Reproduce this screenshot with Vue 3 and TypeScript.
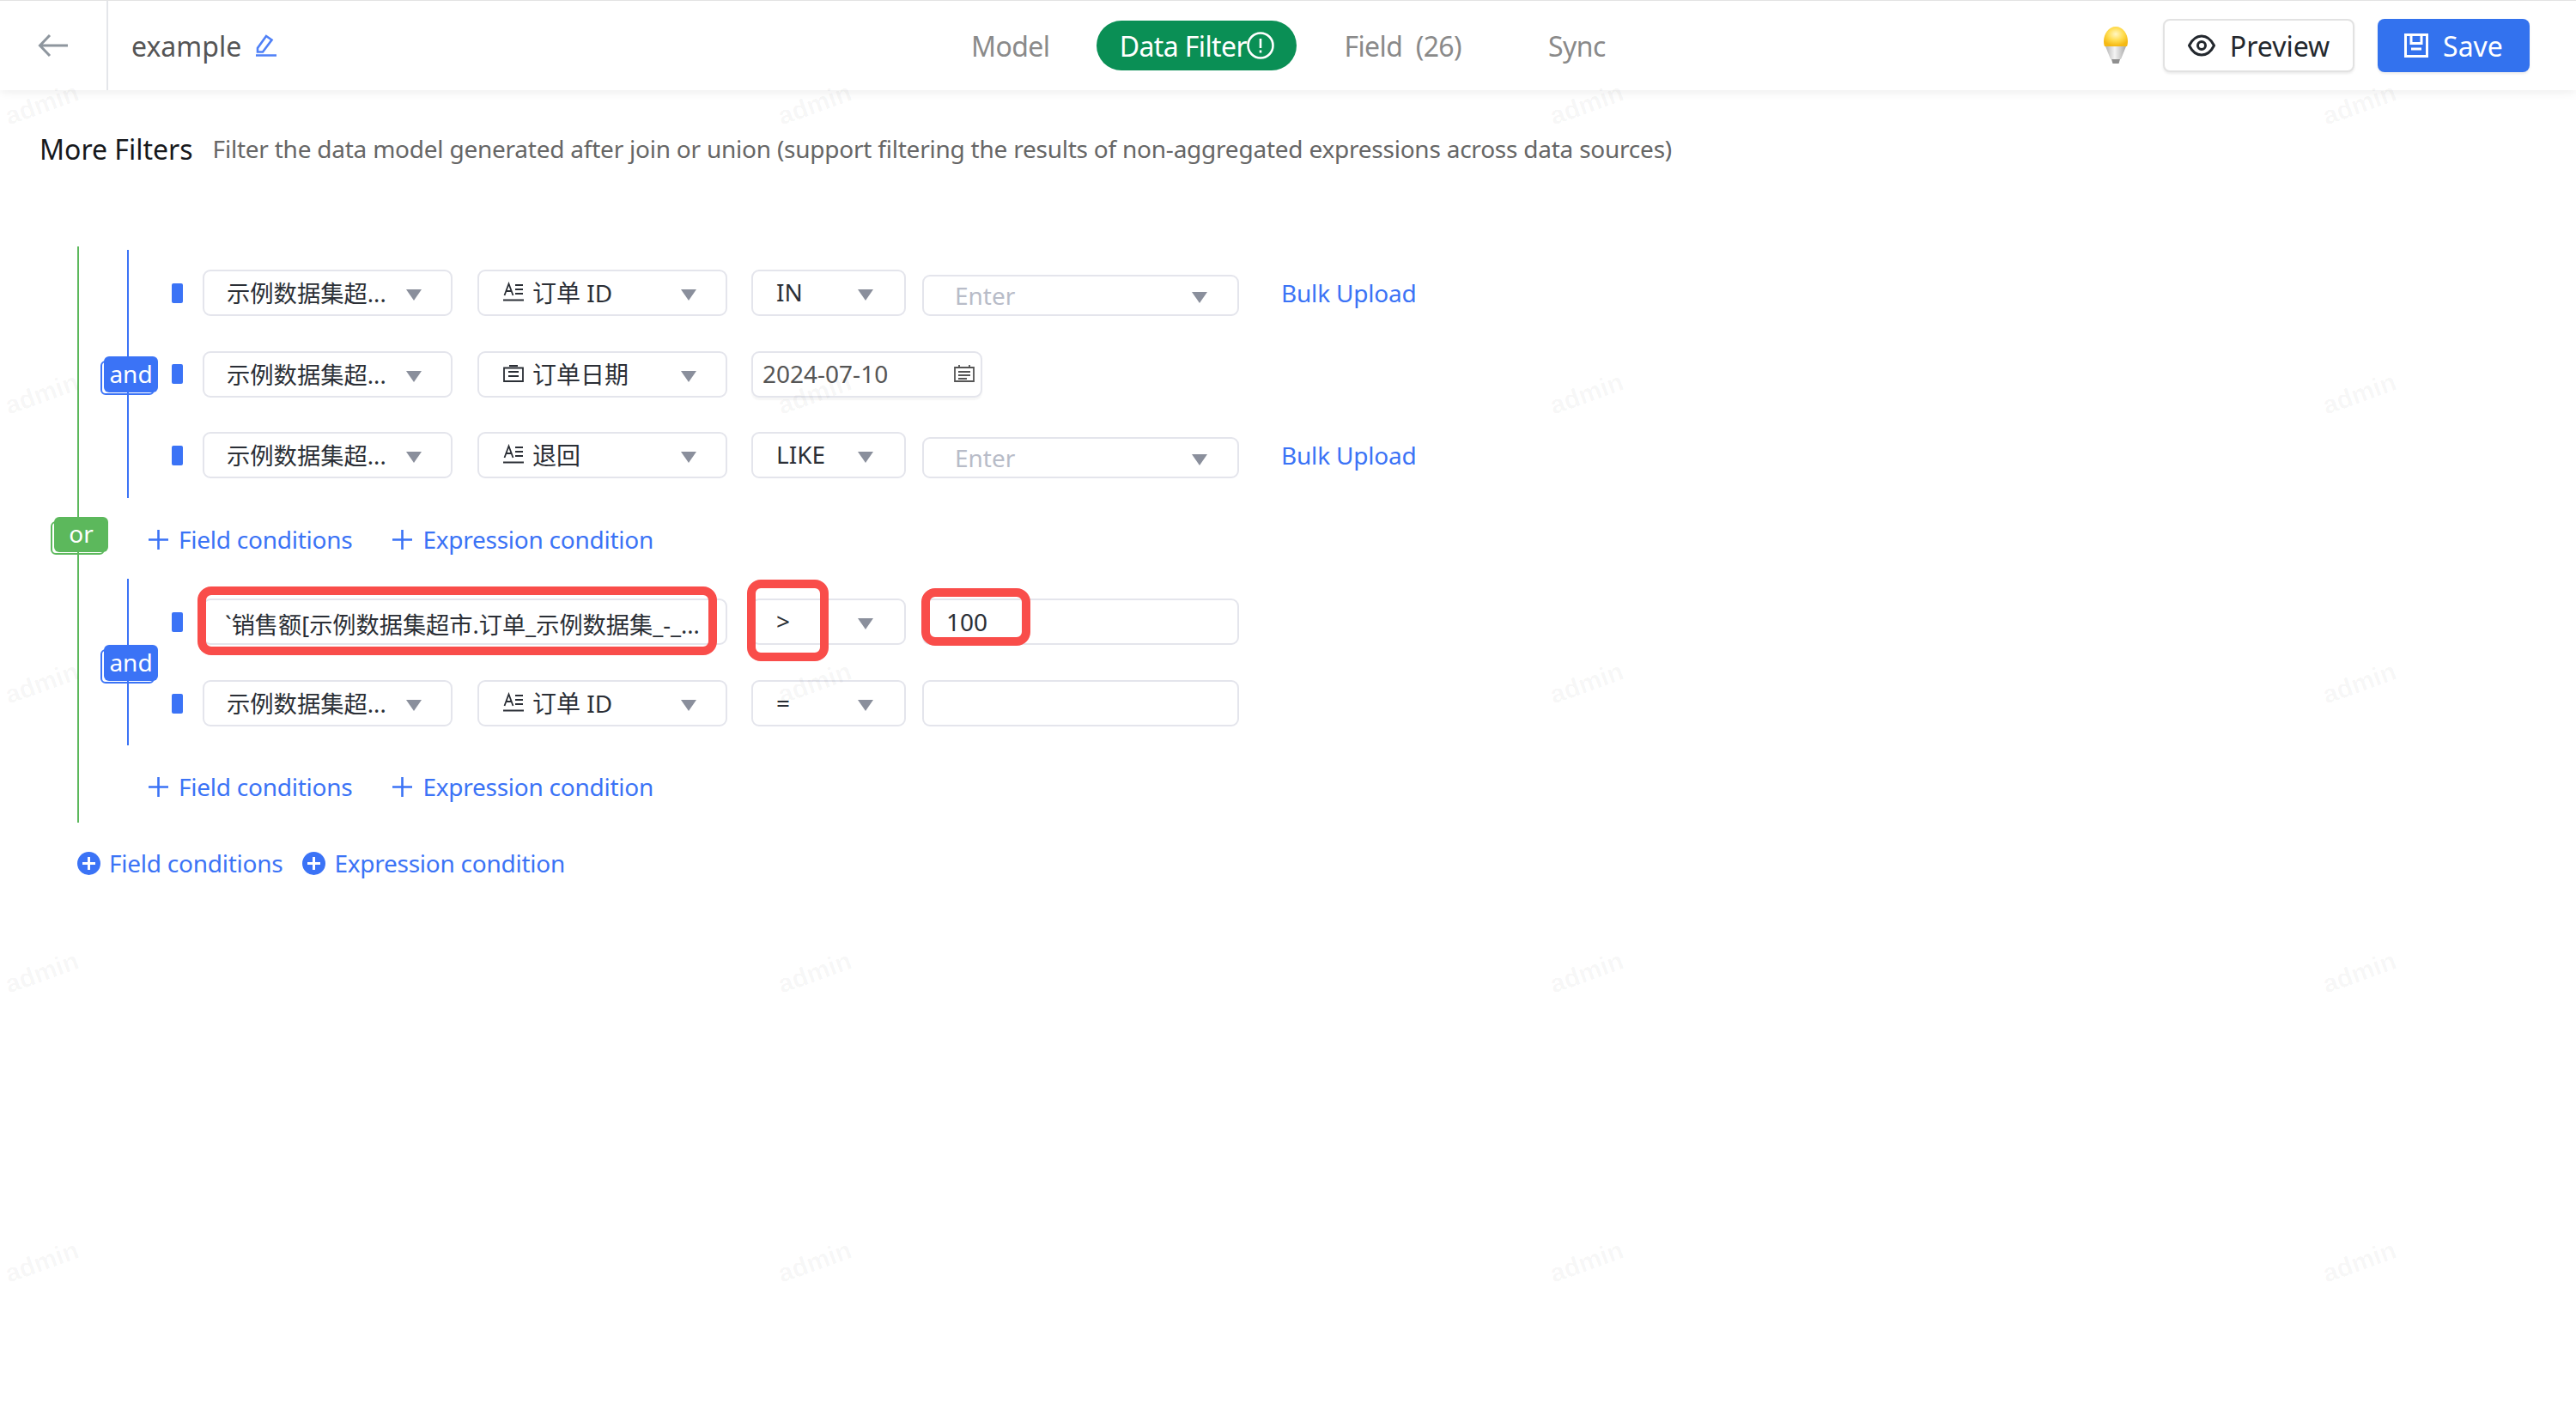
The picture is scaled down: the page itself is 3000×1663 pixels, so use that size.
<script setup lang="ts">
interface Row {
  source?: string
  field?: string
  icon?: 'text' | 'date'
  expr?: string
  op?: string
  kind: 'enter' | 'date' | 'plain'
  value?: string
  marked?: boolean
}

const groupOne: Row[] = [
  { source: '示例数据集超...', field: '订单 ID', icon: 'text', op: 'IN', kind: 'enter' },
  { source: '示例数据集超...', field: '订单日期', icon: 'date', kind: 'date', value: '2024-07-10' },
  { source: '示例数据集超...', field: '退回', icon: 'text', op: 'LIKE', kind: 'enter' },
]
const groupTwo: Row[] = [
  { expr: '`销售额[示例数据集超市.订单_示例数据集_-_...', op: '>', kind: 'plain', value: '100', marked: true },
  { source: '示例数据集超...', field: '订单 ID', icon: 'text', op: '=', kind: 'plain' },
]
const groups = [
  { rows: groupOne, cls: 'group-a' },
  { rows: groupTwo, cls: 'group-b' },
]
const tabs = ['Model']
const marks = Array.from({ length: 20 }, (_, i) => i)
</script>

<template>
  <div class="page">
    <header class="topbar">
      <div class="back">
        <svg width="36" height="28" viewBox="0 0 36 28" fill="none" stroke="#8e969e" stroke-width="3"><path d="M35 14H3M14 2 2.500 14 14 26" /></svg>
      </div>
      <div class="title">
        <span>example</span>
        <svg width="26" height="26" viewBox="0 0 26 26" fill="none" stroke="#4f80f7" stroke-width="2.600"><path d="M1 24.500H25M3 20.500V16L13 2l6.500 4.500L9 20.500Z" /></svg>
      </div>
      <nav class="tabs">
        <span v-for="t in tabs" :key="t" class="tab">{{ t }}</span>
        <span class="pill">Data Filter<svg width="32" height="32" viewBox="0 0 32 32" fill="none" stroke="#fff" stroke-width="2.600"><circle cx="16" cy="16" r="14.500" /><path d="M16 8v11M16 21.500v3" /></svg></span>
        <span class="tab">Field&nbsp; (26)</span>
        <span class="tab sync">Sync</span>
      </nav>
      <div class="actions">
        <svg class="bulb" width="30" height="44" viewBox="0 0 30 44">
          <defs>
            <radialGradient id="glass" cx="50%" cy="38%" r="60%"><stop offset="0" stop-color="#fff6c4" /><stop offset=".55" stop-color="#ffdc4e" /><stop offset="1" stop-color="#f5b914" /></radialGradient>
            <linearGradient id="metal" x1="0" x2="1" y1="0" y2="0"><stop offset="0" stop-color="#b4b4b4" /><stop offset=".45" stop-color="#f4f4f4" /><stop offset="1" stop-color="#a8a8a8" /></linearGradient>
          </defs>
          <path d="M15 0C7 0 1 8 1 17c0 3 .5 5 1 6h26c.5-1 1-3 1-6C29 8 23 0 15 0Z" fill="url(#glass)" />
          <path d="M3 23h24l-6 15H9Z" fill="url(#metal)" />
          <path d="M10 38h10l-1.500 5h-7Z" fill="#8f8f8f" />
        </svg>
        <button class="btn ghost">
          <svg width="32" height="26" viewBox="0 0 32 26" fill="none" stroke="#23282e" stroke-width="3"><path d="M1.500 13C5 6 10 2 16 2s11 4 14.500 11C27 20 22 24 16 24S5 20 1.500 13Z" /><circle cx="16" cy="13" r="4.500" /></svg>
          Preview
        </button>
        <button class="btn primary">
          <svg width="28" height="28" viewBox="0 0 28 28" fill="none" stroke="#fff" stroke-width="3"><path d="M1.500 1.500h25v25h-25ZM8 2v9.500h12V2M8 18h12" /></svg>
          Save
        </button>
      </div>
    </header>

    <main class="content">
      <div class="heading">
        <h1>More Filters</h1>
        <p>Filter the data model generated after join or union (support filtering the results of non-aggregated expressions across data sources)</p>
      </div>

      <div class="outer">
        <template v-for="(g, gi) in groups" :key="g.cls">
          <section class="group" :class="g.cls">
            <span class="badge and">and</span>
            <div v-for="(r, ri) in g.rows" :key="ri" class="row">
              <i class="handle" />
              <template v-if="r.expr">
                <div class="box expr">
                  <span class="clip">{{ r.expr }}</span>
                  <b class="mark m1" />
                </div>
              </template>
              <template v-else>
                <div class="box source"><span>{{ r.source }}</span><i class="caret" /></div>
                <div class="box field">
                  <svg v-if="r.icon === 'text'" class="ficon" width="24" height="24" viewBox="0 0 24 24" fill="none" stroke="#2b2f36" stroke-width="1.800"><path d="M1.500 16 6.500 2.500 11.500 16M3.500 11h6M14 4h9M14 9h9M14 14h9M0 21.500h24" /></svg>
                  <svg v-else class="ficon" width="24" height="20" viewBox="0 0 24 20" fill="none" stroke="#2b2f36" stroke-width="1.800"><path d="M1 3.500h22v15.500H1ZM7 1h10M6 8h12M6 13h12" /></svg>
                  <span>{{ r.field }}</span><i class="caret" />
                </div>
              </template>
              <div v-if="r.kind === 'date'" class="box date">
                <span>{{ r.value }}</span>
                <svg width="24" height="20" viewBox="0 0 24 20" fill="none" stroke="#555" stroke-width="1.800"><path d="M1 3h22v16H1ZM6 0v4M18 0v4M5 8h14M5 12h14M5 16h10" /></svg>
              </div>
              <template v-else>
                <div class="box op"><span>{{ r.op }}</span><i class="caret" /><b v-if="r.marked" class="mark m2" /></div>
                <div v-if="r.kind === 'enter'" class="box val short"><span class="hint">Enter</span><i class="caret" /></div>
                <div v-else class="box val"><span>{{ r.value }}</span><b v-if="r.marked" class="mark m3" /></div>
              </template>
              <a v-if="r.kind === 'enter'" class="link upload">Bulk Upload</a>
            </div>
          </section>
          <div class="adds">
            <span class="add"><svg width="23" height="23" viewBox="0 0 23 23" stroke="#3b73f6" stroke-width="2.600"><path d="M0 11.500h23M11.500 0v23" /></svg>Field conditions</span>
            <span class="add"><svg width="23" height="23" viewBox="0 0 23 23" stroke="#3b73f6" stroke-width="2.600"><path d="M0 11.500h23M11.500 0v23" /></svg>Expression condition</span>
            <span v-if="gi === 0" class="badge or">or</span>
          </div>
        </template>
      </div>

      <div class="root-adds">
        <span class="add"><svg width="27" height="27" viewBox="0 0 27 27"><circle cx="13.500" cy="13.500" r="13.500" fill="#3b73f6" /><path d="M6 13.500h15M13.500 6v15" stroke="#fff" stroke-width="3" /></svg>Field conditions</span>
        <span class="add"><svg width="27" height="27" viewBox="0 0 27 27"><circle cx="13.500" cy="13.500" r="13.500" fill="#3b73f6" /><path d="M6 13.500h15M13.500 6v15" stroke="#fff" stroke-width="3" /></svg>Expression condition</span>
      </div>
    </main>

    <div class="watermarks">
      <span v-for="m in marks" :key="m">admin</span>
    </div>
  </div>
</template>

<style>
html, body { margin: 0; background: #fff; }
</style>

<style scoped>
.page {
  position: relative;
  width: 3000px;
  height: 1663px;
  overflow: hidden;
  background: #fff;
  font-family: "Noto Sans", "Noto Sans CJK SC", sans-serif;
  font-size: 28px;
  color: #2b2f36;
}
.topbar {
  display: flex;
  align-items: center;
  box-sizing: border-box;
  height: 105px;
  border-top: 1px solid #e3e3e3;
  box-shadow: 0 2px 12px rgba(0, 0, 0, .08);
  background: #fff;
  position: relative;
}
.back {
  box-sizing: border-box;
  width: 126px;
  height: 100%;
  border-right: 2px solid #e4e6ea;
  display: flex;
  align-items: center;
  padding-left: 44px;
}
.title {
  width: 1005px;
  box-sizing: border-box;
  padding-left: 27px;
  display: flex;
  align-items: center;
  gap: 16px;
  font-size: 32px;
  color: #555;
}
.tabs {
  display: flex;
  align-items: center;
  gap: 55px;
  font-size: 32px;
  letter-spacing: -.6px;
  color: #8a8a8a;
}
.sync { margin-left: 46px; }
.pill {
  box-sizing: border-box;
  display: flex;
  align-items: center;
  justify-content: center;
  width: 233px;
  height: 58px;
  border-radius: 29px;
  background: #0a8f55;
  color: #fff;
}
.actions {
  margin-left: auto;
  margin-right: 54px;
  display: flex;
  align-items: center;
}
.bulb { margin-right: 40px; }
.btn {
  box-sizing: border-box;
  height: 62px;
  border-radius: 8px;
  display: flex;
  align-items: center;
  justify-content: center;
  gap: 17px;
  font: inherit;
  font-size: 32px;
  padding: 0;
  box-shadow: 0 2px 3px rgba(0, 0, 0, .08);
}
.ghost { width: 223px; background: #fff; border: 2px solid #e2e2e2; color: #23282e; }
.primary { width: 177px; margin-left: 27px; background: #3372ee; border: 0; color: #fff; }
.content { padding: 0 0 0 46px; }
.heading {
  display: flex;
  align-items: center;
  gap: 23px;
  height: 44px;
  margin-top: 46px;
}
h1 { margin: 0; font-size: 32px; font-weight: 400; color: #16181c; }
p { margin: 0; font-size: 28px; letter-spacing: -.23px; color: #666; }
.outer {
  box-sizing: border-box;
  width: 2000px;
  margin: 92px 0 0 44px;
  padding: 4px 0 15px 0;
  border-left: 2px solid #5cb85c;
  position: relative;
}
.group {
  position: relative;
  margin-left: 56px;
  border-left: 2px solid #3b73f6;
  padding-left: 50px;
  display: flex;
  flex-direction: column;
}
.group-a { padding-top: 23px; padding-bottom: 23px; gap: 40.500px; }
.group-b { padding-top: 23px; padding-bottom: 22px; gap: 41px; }
.row { display: flex; align-items: center; height: 54px; }
.handle {
  width: 13px;
  height: 23px;
  border-radius: 2px;
  background: #3b73f6;
  margin-right: 23px;
  flex: none;
}
.box {
  box-sizing: border-box;
  position: relative;
  flex: none;
  height: 54px;
  border: 2px solid #e4e5ec;
  border-radius: 9px;
  background: #fff;
  display: flex;
  align-items: center;
  white-space: nowrap;
}
.source { width: 291px; padding-left: 26px; font-size: 27.300px; padding-bottom: 2px; }
.field { width: 291px; margin-left: 29px; padding-left: 28px; padding-bottom: 2px; }
.source .caret, .field .caret { right: 34px; }
.ficon { margin-right: 10px; flex: none; }
.expr { width: 611px; padding: 4px 0 0 24px; font-size: 27.200px; }
.clip { overflow: hidden; white-space: nowrap; }
.caret {
  position: absolute;
  right: 16px;
  top: 21px;
  width: 0;
  height: 0;
  border-left: 9px solid transparent;
  border-right: 9px solid transparent;
  border-top: 13px solid #8a8f9c;
}
.op { width: 180px; margin-left: 28px; padding-left: 27px; padding-bottom: 2px; }
.op .caret { right: 36px; }
.val { width: 369px; margin-left: 19px; padding-left: 26px; }
.val.short { height: 48px; align-self: flex-end; padding-left: 36px; }
.val.short .caret { right: 35px; top: 18px; }
.hint { color: #b8bcc8; }
.date {
  width: 269px;
  margin-left: 28px;
  padding: 0 7px 2px 11px;
  justify-content: space-between;
  color: #555;
  box-shadow: 0 3px 2px rgba(0, 0, 0, .04);
}
.link { color: #3b73f6; }
.upload { margin-left: 49px; letter-spacing: -.2px; }
.adds {
  position: relative;
  display: flex;
  align-items: center;
  gap: 47px;
  height: 54px;
  margin: 21px 0 19px 0;
  padding-left: 81px;
}
.group-b + .adds { margin-bottom: 0; }
.add {
  display: inline-flex;
  align-items: center;
  gap: 12px;
  color: #3b73f6;
  letter-spacing: -.25px;
  white-space: nowrap;
}
.root-adds {
  display: flex;
  gap: 23px;
  margin: 27px 0 0 44px;
  height: 40px;
  align-items: center;
}
.root-adds .add { gap: 10px; }
.badge {
  position: absolute;
  display: flex;
  align-items: center;
  justify-content: center;
  box-sizing: border-box;
  padding-bottom: 3px;
  border-radius: 6px;
  color: #fff;
}
.badge::before {
  content: "";
  position: absolute;
  left: -4px;
  top: 5px;
  right: 4px;
  bottom: -3px;
  border-radius: 6px;
  border: 2px solid;
  z-index: -1;
}
.and { left: -29px; width: 63px; height: 42px; background: #3b73f6; z-index: 1; }
.and::before { border-color: #3b73f6; }
.group-a .and { top: 124px; }
.group-b .and { top: 77px; }
.or { left: -29px; top: 1px; width: 63px; height: 41px; background: #5cb85c; z-index: 1; }
.or::before { border-color: #5cb85c; }
.mark {
  position: absolute;
  box-sizing: border-box;
  border: 10px solid #f94d4a;
  border-radius: 16px;
  pointer-events: none;
}
.m1 { left: -8px; top: -16px; width: 605px; height: 80px; }
.m2 { left: -7px; top: -24px; width: 95px; height: 95px; }
.m3 { left: -3px; top: -14px; width: 127px; height: 67px; }
.watermarks {
  position: absolute;
  inset: 0;
  display: grid;
  grid-template-columns: repeat(4, 899.500px);
  grid-auto-rows: 337px;
  pointer-events: none;
  padding: 103px 0 0 6px;
}
.watermarks span {
  width: 96px;
  height: 44px;
  font: 700 30px "Liberation Sans", sans-serif;
  color: rgba(0, 0, 0, .04);
  transform: rotate(-20deg);
}
</style>
